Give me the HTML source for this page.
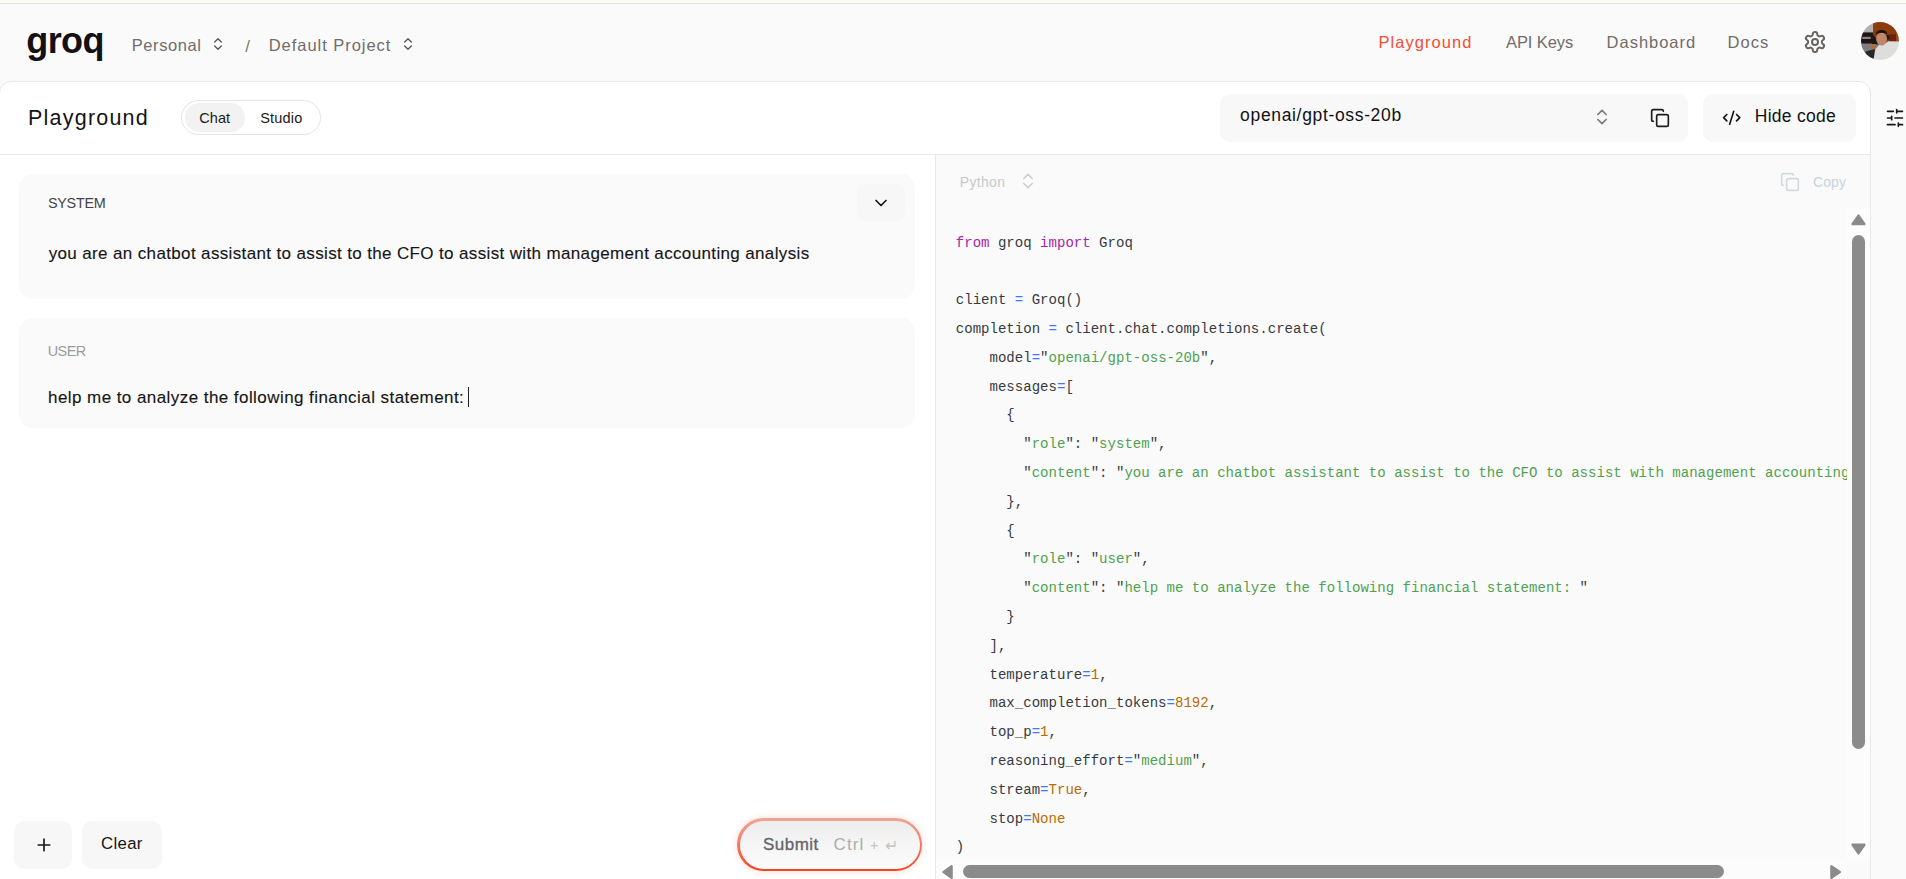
<!DOCTYPE html>
<html lang="en">
<head>
<meta charset="utf-8">
<title>GroqCloud Playground</title>
<style>
*{box-sizing:border-box;margin:0;padding:0}
html,body{width:1906px;height:879px;overflow:hidden;background:#fafafa}
body{position:relative;font-family:"Liberation Sans",sans-serif;color:#111;-webkit-font-smoothing:antialiased}
header,nav,main,section,aside,footer{display:contents}
button{border:0;padding:0;font:inherit;color:inherit;background:none;text-align:left;cursor:pointer}
a{color:inherit;text-decoration:none}
h1{font-weight:400}
.abs{position:absolute}
.t{position:absolute;white-space:nowrap;line-height:0;display:block;margin-top:-.3465em}
.strip{left:0;top:0;width:1906px;height:5px;background:#fafbf6}
.strip i{position:absolute;left:0;top:0;width:100%;height:3px;background:#f9faf2}
.strip b{position:absolute;left:0;top:3px;width:100%;height:1px;background:#dfe4dc}
/* top header */
.logo{left:26.2px;top:53.6px;font-size:36px;font-weight:700;color:#141013;letter-spacing:-.55px}
.crumb{font-size:16.5px;color:#716c6a}
.nav{font-size:16.5px;color:#716c6a}
.nav.on{color:#f04e36}
/* main panel */
.panel{left:-1px;top:81px;width:1872px;height:820px;background:#fff;border:1px solid #e8e8e8;border-radius:12px 12px 0 0}
.hline{left:0;top:154px;width:1870px;height:1px;background:#e9e9e9}
.title{font-size:21.5px;color:#151515}
.toggle{left:181px;top:100px;width:140px;height:35px;border:1px solid #e4e4e4;border-radius:18px;background:#fff}
.toggle .sel{position:absolute;left:3px;top:2px;width:60px;height:29px;border-radius:15px;background:#f2f2f2}
.seg{font-size:14.5px;color:#1b1b1b}
.select{left:1220px;top:94px;width:468px;height:48px;border-radius:10px;background:#f8f8f8}
.hide{left:1703px;top:94px;width:152.6px;height:48px;border-radius:10px;background:#f8f8f8}
.f17{font-size:17.5px;color:#111}
/* messages */
.card{left:19px;width:896px;border-radius:14px;background:#fafafa}
.role{font-size:14.4px}
.msg{font-size:17px;color:#151515;-webkit-text-stroke:.12px #151515}
.chev{left:857px;top:184px;width:48px;height:37px;border-radius:8px;background:#f7f7f7}
.caret{left:468px;top:387px;width:1px;height:20px;background:#222}
.vline{left:935px;top:155px;width:1px;height:724px;background:#e9e9e9}
.btn{top:821px;height:48px;border-radius:10px;background:#f7f7f7}
.submit{left:737px;top:818px;width:185px;height:53px;border-radius:27px;background:linear-gradient(180deg,#f0a494 0%,#f2806c 45%,#f5431f 100%);box-shadow:0 0 5px 2px rgba(245,90,60,.13)}
.submit i{position:absolute;left:2.5px;top:2.5px;right:2.5px;bottom:2.5px;border-radius:24px;background:linear-gradient(180deg,#ededed 0%,#f6f6f6 55%,#fbfbfb 100%)}
/* code panel */
.codebg{left:936px;top:155px;width:934px;height:724px;background:#fafafa}
.rborder{left:1870px;top:95px;width:1px;height:784px;background:#e9e9e9}
.lang{font-size:14px;color:#c9c9c9}
.copy{font-size:14px;color:#c6d3d8}
pre.code{position:absolute;left:955.8px;top:228.6px;width:891px;height:632px;overflow:hidden;font-family:"Liberation Mono",monospace;font-size:14.0625px;line-height:28.8px;color:#383a42;white-space:pre;tab-size:4}
pre.code code{font:inherit}
.k{color:#a626a4}.s{color:#50a14f}.o{color:#4078f2}.n{color:#b76b01}
.vtrack{left:1847px;top:208px;width:23px;height:652px;background:#fcfcfc}
.htrack{left:936px;top:860px;width:911px;height:19px;background:#fcfcfc}
.vthumb{left:1852px;top:234.5px;width:13px;height:514.5px;border-radius:6.5px;background:#8b8b8b}
.hthumb{left:963px;top:865px;width:761px;height:13px;border-radius:6.5px;background:#8b8b8b}
svg{position:absolute;overflow:visible}
svg.ic{fill:none;stroke-width:2;stroke-linecap:round;stroke-linejoin:round}
svg.arr path{fill:#8b8b8b;stroke:#8b8b8b;stroke-width:2.4;stroke-linejoin:round}
</style>
</head>
<body>
<div class="abs strip"><i></i><b></b></div>
<header>
<a class="t logo" id="logo">groq</a>
<nav>
<button class="t crumb" id="c1" style="left:131.8px;top:51px;letter-spacing:.57px">Personal</button>
<svg class="ic" style="left:210px;top:36.3px" width="16" height="16" viewBox="0 0 24 24" stroke="#5a5654"><path d="m7 15 5 5 5-5"/><path d="m7 9 5-5 5 5"/></svg>
<span class="t crumb" id="c2" style="left:245.3px;top:53px;font-size:17px;color:#7d7977">/</span>
<button class="t crumb" id="c3" style="left:268.7px;top:51px;letter-spacing:.96px">Default Project</button>
<svg class="ic" style="left:400.3px;top:36.3px" width="16" height="16" viewBox="0 0 24 24" stroke="#5a5654"><path d="m7 15 5 5 5-5"/><path d="m7 9 5-5 5 5"/></svg>
</nav>
<nav>
<a class="t nav on" id="n1" style="left:1378.4px;top:48px;letter-spacing:1.07px">Playground</a>
<a class="t nav" id="n2" style="left:1506px;top:48px;letter-spacing:-.09px">API Keys</a>
<a class="t nav" id="n3" style="left:1606.6px;top:48px;letter-spacing:.98px">Dashboard</a>
<a class="t nav" id="n4" style="left:1727.6px;top:48px;letter-spacing:1px">Docs</a>
<svg class="ic" style="left:1803px;top:29.8px" width="24" height="24" viewBox="0 0 24 24" stroke="#69635f"><path d="M12.22 2h-.44a2 2 0 0 0-2 2v.18a2 2 0 0 1-1 1.73l-.43.25a2 2 0 0 1-2 0l-.15-.08a2 2 0 0 0-2.73.73l-.22.38a2 2 0 0 0 .73 2.73l.15.1a2 2 0 0 1 1 1.72v.51a2 2 0 0 1-1 1.74l-.15.09a2 2 0 0 0-.73 2.73l.22.38a2 2 0 0 0 2.73.73l.15-.08a2 2 0 0 1 2 0l.43.25a2 2 0 0 1 1 1.73V20a2 2 0 0 0 2 2h.44a2 2 0 0 0 2-2v-.18a2 2 0 0 1 1-1.73l.43-.25a2 2 0 0 1 2 0l.15.08a2 2 0 0 0 2.73-.73l.22-.39a2 2 0 0 0-.73-2.73l-.15-.08a2 2 0 0 1-1-1.74v-.5a2 2 0 0 1 1-1.74l.15-.09a2 2 0 0 0 .73-2.73l-.22-.38a2 2 0 0 0-2.73-.73l-.15.08a2 2 0 0 1-2 0l-.43-.25a2 2 0 0 1-1-1.73V4a2 2 0 0 0-2-2z"/><circle cx="12" cy="12" r="3"/></svg>
<svg style="left:1861px;top:22.4px" width="38" height="38" viewBox="0 0 38 38" role="img"><defs><clipPath id="av"><circle cx="19" cy="19" r="19"/></clipPath><filter id="avb" x="-10%" y="-10%" width="120%" height="120%"><feGaussianBlur stdDeviation=".55"/></filter></defs><g clip-path="url(#av)"><g filter="url(#avb)"><rect x="-2" y="-2" width="42" height="42" fill="#858388"/><rect x="-2" y="-2" width="15" height="13" fill="#b3b1ac"/><rect x="-2" y="10.4" width="21" height="12" fill="#1b1719"/><rect x="1.2" y="14.8" width="8.5" height="2.2" fill="#8f807b"/><rect x="-2" y="21.5" width="13" height="7.5" fill="#7f7b84"/><rect x="9.5" y="22" width="5.5" height="5" fill="#b0703a"/><path d="M2 40 4.7 29.5 13.8 27 13 40Z" fill="#29252a"/><path d="M12.1-2H40V21H20L12.1 13Z" fill="#8c3b10"/><rect x="28" y="12.4" width="7" height="7" fill="#6a2010"/><rect x="35" y="10" width="5" height="11" fill="#9a4c18"/><path d="M12 40 14.6 27 18.6 22.6 22 23.4 27 19.2 40 19.6V40Z" fill="#dddddb"/><rect x="25.3" y="13.2" width="2.8" height="4.2" fill="#1e1a1e"/><ellipse cx="20.5" cy="17" rx="5.4" ry="6.4" fill="#bf8869"/><path d="M14.6 13c-.3-6.400 11.800-6.600 11.600-.4-2.400-2.400-9-2.600-11.600.4Z" fill="#191314"/></g></g></svg>
</nav>
</header>

<main>
<div class="abs panel"></div>
<div class="abs hline"></div>
<section>
<h1 class="t title" id="title" style="left:28px;top:125px;letter-spacing:1.22px">Playground</h1>
<div class="abs toggle"><div class="sel"></div></div>
<button class="t seg" id="s1" style="left:199.2px;top:123px;letter-spacing:.1px">Chat</button>
<button class="t seg" id="s2" style="left:260.2px;top:123px;letter-spacing:.2px">Studio</button>
<div class="abs select">
<span class="t f17" id="model" style="left:20.1px;top:27.5px;letter-spacing:.66px">openai/gpt-oss-20b</span>
<svg class="ic" style="left:371.9px;top:13.3px" width="20" height="20" viewBox="0 0 24 24" stroke="#7a7a7a"><path d="m7 15 5 5 5-5"/><path d="m7 9 5-5 5 5"/></svg>
<svg class="ic" style="left:429.7px;top:14px" width="20" height="20" viewBox="0 0 24 24" stroke="#1c1c1c"><rect width="14" height="14" x="8" y="8" rx="2" ry="2"/><path d="M4 16c-1.1 0-2-.9-2-2V4c0-1.1.9-2 2-2h10c1.1 0 2 .9 2 2"/></svg>
</div>
<button class="abs hide">
<svg class="ic" style="left:18.7px;top:13.8px" width="19.4" height="19.4" viewBox="0 0 24 24" stroke="#141414"><path d="m18 16 4-4-4-4"/><path d="m6 8-4 4 4 4"/><path d="m14.5 4-5 16"/></svg>
<span class="t f17" id="hide" style="left:51.8px;top:27.6px;letter-spacing:.27px">Hide code</span>
</button>
<svg class="ic" style="left:1884.7px;top:108.3px" width="20" height="20" viewBox="0 0 24 24" stroke="#1a1718"><path d="M21 4h-7M10 4H3M21 12h-9M8 12H3M21 20h-5M12 20H3M14 2v4M8 10v4M16 18v4"/></svg>
</section>

<section>
<div class="abs card" style="top:174px;height:125px"></div>
<button class="abs chev"><svg class="ic" style="left:14.4px;top:8.8px" width="20" height="20" viewBox="0 0 24 24" stroke="#141414"><path d="m6 9 6 6 6-6"/></svg></button>
<span class="t role" id="r1" style="left:47.9px;top:207.6px;color:#444;letter-spacing:-.25px">SYSTEM</span>
<p class="t msg" id="m1" style="left:48.7px;top:260px;letter-spacing:.36px">you are an chatbot assistant to assist to the CFO to assist with management accounting analysis</p>
<div class="abs card" style="top:318px;height:110px"></div>
<span class="t role" id="r2" style="left:47.7px;top:355.6px;color:#9a9a9a;letter-spacing:-.5px">USER</span>
<p class="t msg" id="m2" style="left:48px;top:403.6px;letter-spacing:.437px">help me to analyze the following financial statement:</p>
<div class="abs caret"></div>
</section>

<footer>
<button class="abs btn" style="left:14px;width:58px"><svg class="ic" style="left:19.5px;top:13.5px" width="20" height="20" viewBox="0 0 24 24" stroke="#1a1718"><path d="M5 12h14M12 5v14"/></svg></button>
<button class="abs btn" style="left:82px;width:80px"><span class="t" id="clear" style="left:19px;top:29px;color:#151515;font-size:16.8px;letter-spacing:.33px">Clear</span></button>
<button class="abs submit"><i></i>
<span class="t" id="submit" style="left:26px;top:32.9px;color:#666;font-size:17px;letter-spacing:.48px;-webkit-text-stroke:.35px #666">Submit</span>
<span class="t" id="ctrl" style="left:96.5px;top:32.9px;color:#adadad;font-size:17px;letter-spacing:1.1px">Ctrl</span>
<span class="t" id="plus" style="left:133px;top:32.5px;color:#c4c4c4;font-size:14.5px">+</span>
<span class="t" id="ret" style="left:147.6px;top:34px;color:#c4c4c4;font-size:16px">↵</span>
</button>
</footer>
<div class="abs vline"></div>

<aside>
<div class="abs codebg"></div>
<div class="abs rborder"></div>
<button class="t lang" id="py" style="left:959.8px;top:187px;letter-spacing:.32px">Python</button>
<svg class="ic" style="left:1018.4px;top:171.4px" width="20" height="20" viewBox="0 0 24 24" stroke="#cfcfcf"><path d="m7 15 5 5 5-5"/><path d="m7 9 5-5 5 5"/></svg>
<svg class="ic" style="left:1779.5px;top:171.5px" width="20" height="20" viewBox="0 0 24 24" stroke="#d2d9dc"><rect width="14" height="14" x="8" y="8" rx="2" ry="2"/><path d="M4 16c-1.1 0-2-.9-2-2V4c0-1.1.9-2 2-2h10c1.1 0 2 .9 2 2"/></svg>
<button class="t copy" id="copy" style="left:1812.9px;top:187px;letter-spacing:.13px">Copy</button>
<pre class="code" id="code"><code><span class="k">from</span> groq <span class="k">import</span> Groq

client <span class="o">=</span> Groq()
completion <span class="o">=</span> client.chat.completions.create(
    model<span class="o">=</span>"<span class="s">openai/gpt-oss-20b</span>",
    messages<span class="o">=</span>[
      {
        "<span class="s">role</span>": "<span class="s">system</span>",
        "<span class="s">content</span>": "<span class="s">you are an chatbot assistant to assist to the CFO to assist with management accounting analysis</span>"
      },
      {
        "<span class="s">role</span>": "<span class="s">user</span>",
        "<span class="s">content</span>": "<span class="s">help me to analyze the following financial statement: </span>"
      }
    ],
    temperature<span class="o">=</span><span class="n">1</span>,
    max_completion_tokens<span class="o">=</span><span class="n">8192</span>,
    top_p<span class="o">=</span><span class="n">1</span>,
    reasoning_effort<span class="o">=</span>"<span class="s">medium</span>",
    stream<span class="o">=</span><span class="n">True</span>,
    stop<span class="o">=</span><span class="n">None</span>
)</code></pre>
<div class="abs vtrack"></div>
<div class="abs htrack"></div>
<div class="abs vthumb"></div>
<div class="abs hthumb"></div>
<svg class="arr" style="left:1847px;top:208px" width="23" height="24" viewBox="0 0 23 24"><path d="M11.5 7.6 17.4 16H5.6Z"/></svg>
<svg class="arr" style="left:1847px;top:837px" width="23" height="24" viewBox="0 0 23 24"><path d="M11.5 16.2 17.4 7.8H5.6Z"/></svg>
<svg class="arr" style="left:936px;top:860px" width="24" height="24" viewBox="0 0 24 24"><path d="M7.6 12 15.6 6.2V17.8Z"/></svg>
<svg class="arr" style="left:1823px;top:860px" width="24" height="24" viewBox="0 0 24 24"><path d="M16.8 12 8.4 6.2V17.8Z"/></svg>
</aside>
</main>
</body>
</html>
